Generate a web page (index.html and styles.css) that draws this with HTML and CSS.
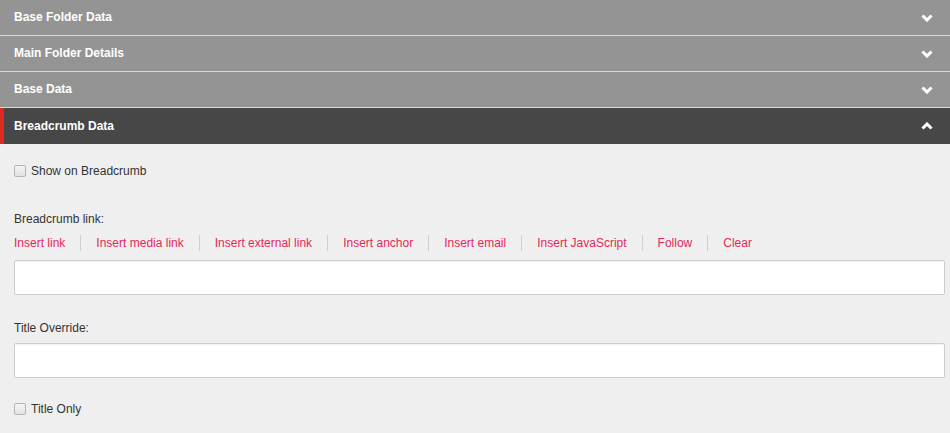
FILE: index.html
```html
<!DOCTYPE html>
<html lang="en">
<head>
    <meta charset="UTF-8">
    <meta name="viewport" content="width=device-width, initial-scale=1.0">
    <title>Breadcrumb Data</title>
    <link rel="stylesheet" href="styles.css">
</head>
<body>
    <div class="section">
        <span>Base Folder Data</span>
        <svg class="chevron" width="12" height="8" viewBox="0 0 12 8"><polyline points="1.5,1.5 6,6 10.5,1.5"/></svg>
    </div>
    <div class="section">
        <span>Main Folder Details</span>
        <svg class="chevron" width="12" height="8" viewBox="0 0 12 8"><polyline points="1.5,1.5 6,6 10.5,1.5"/></svg>
    </div>
    <div class="section">
        <span>Base Data</span>
        <svg class="chevron" width="12" height="8" viewBox="0 0 12 8"><polyline points="1.5,1.5 6,6 10.5,1.5"/></svg>
    </div>
    <div class="section open">
        <span>Breadcrumb Data</span>
        <svg class="chevron" width="12" height="8" viewBox="0 0 12 8"><polyline points="1.5,6.5 6,2 10.5,6.5"/></svg>
    </div>

    <div class="panel">
        <label class="check first">
            <input type="checkbox">
            <span>Show on Breadcrumb</span>
        </label>

        <div class="field-label link-label">Breadcrumb link:</div>
        <div class="link-actions">
            <a href="#">Insert link</a>
            <a href="#">Insert media link</a>
            <a href="#">Insert external link</a>
            <a href="#">Insert anchor</a>
            <a href="#">Insert email</a>
            <a href="#">Insert JavaScript</a>
            <a href="#">Follow</a>
            <a href="#">Clear</a>
        </div>
        <input class="text-input" type="text">

        <div class="field-label title-label">Title Override:</div>
        <input class="text-input title-input" type="text">

        <label class="check last">
            <input type="checkbox">
            <span>Title Only</span>
        </label>
    </div>
</body>
</html>
```

FILE: styles.css
```css
body {
    margin: 0;
    font-family: "Liberation Sans", Arial, sans-serif;
    background-color: #efefef;
    color: #333;
}
.section {
    display: flex;
    justify-content: space-between;
    align-items: center;
    height: 35px;
    padding: 0 17px 0 14px;
    background-color: #949494;
    border-bottom: 1px solid #d6d6d6;
    color: white;
    font-size: 12px;
    font-weight: bold;
}
.section span {
    margin-top: -1px;
}
.section.open {
    background-color: #474747;
    border-left: 4px solid #dd2a1f;
    border-bottom: none;
    height: 36px;
    padding-left: 10px;
}
.chevron {
    fill: none;
    stroke: white;
    stroke-width: 3;
}
.panel {
    padding: 17px 5px 14px 14px;
    font-size: 12px;
}
.check {
    display: flex;
    align-items: center;
    height: 20px;
}
.check input {
    appearance: none;
    -webkit-appearance: none;
    width: 12px;
    height: 12px;
    margin: 0 5px 0 0;
    border: 1px solid #b5b5b5;
    border-radius: 2px;
    background: linear-gradient(#f4f4f4, #e2e2e2);
}
.check.last {
    margin-top: 21px;
}
.field-label {
    line-height: 20px;
}
.link-label {
    margin-top: 28px;
}
.title-label {
    margin-top: 23px;
}
.link-actions {
    display: flex;
    align-items: center;
    margin-top: 6px;
    line-height: 16px;
}
.link-actions a {
    color: #e3285a;
    text-decoration: none;
    padding: 0 15px;
    border-left: 1px solid #cfcfcf;
}
.link-actions a:first-child {
    padding-left: 0;
    border-left: none;
}
.text-input {
    display: block;
    box-sizing: border-box;
    width: 100%;
    height: 35px;
    margin: 9px 0 0;
    border: 1px solid #cdcdcd;
    border-radius: 2px;
    background-color: white;
    box-shadow: inset 0 1px 1px rgba(0, 0, 0, 0.05);
}
.title-input {
    margin-top: 5px;
}
```
